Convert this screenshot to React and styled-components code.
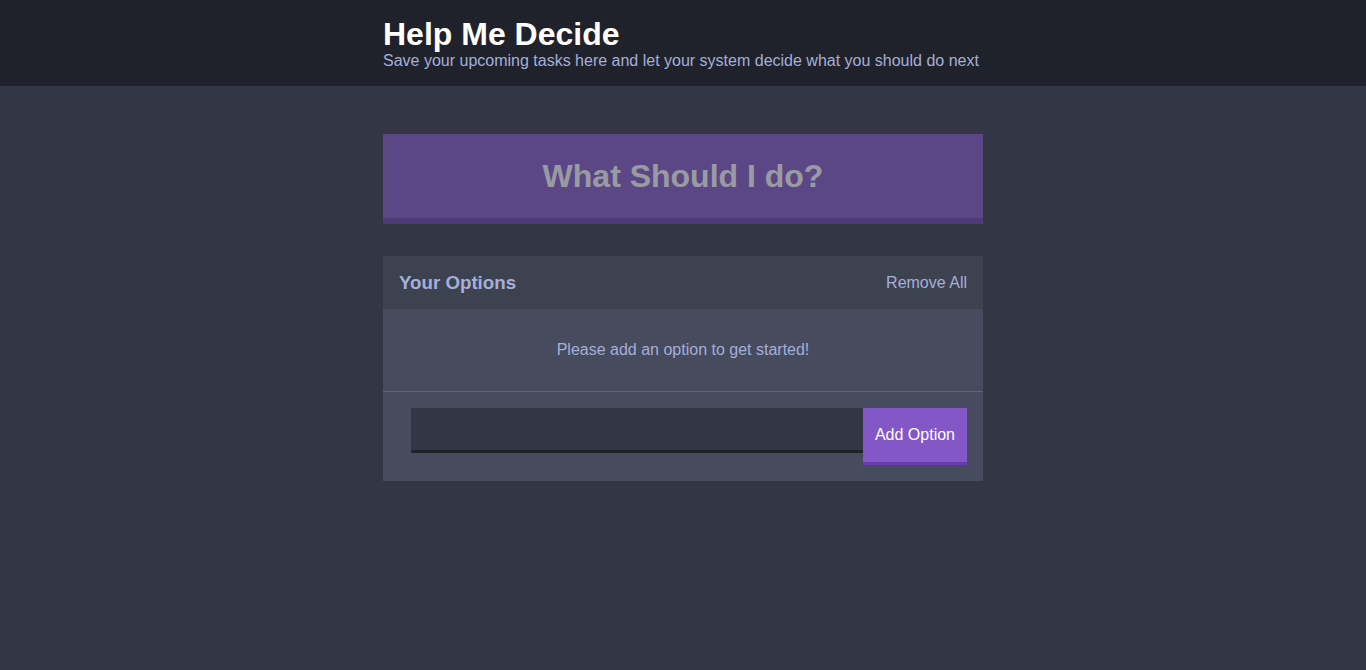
import React from "react";
import styled, { createGlobalStyle } from "styled-components";

const GlobalStyle = createGlobalStyle`
  * { box-sizing: border-box; }
  html, body { margin: 0; padding: 0; }
  body {
    background: #333745;
    color: #a5afd7;
    font-family: "Liberation Sans", Arial, Helvetica, sans-serif;
    font-size: 16px;
    line-height: normal;
  }
  button, input { font-family: inherit; font-size: 16px; }
  h1, h2, h3, p { margin: 0; }
`;

const Header = styled.header`
  background: #20222b;
  padding: 16px 0;
  margin-bottom: 48px;
`;

const Container = styled.div`
  max-width: 600px;
  margin: 0 auto;
`;

const Title = styled.h1`
  color: white;
  font-size: 32px;
  line-height: 36px;
`;

const Subtitle = styled.p`
  line-height: 18px;
`;

const BigButton = styled.button`
  display: block;
  width: 100%;
  margin-bottom: 32px;
  padding: 24px;
  background: #8357c5;
  border: none;
  border-bottom: 6px solid #693cad;
  color: white;
  font-size: 32px;
  line-height: 36px;
  font-weight: bold;

  &:disabled {
    opacity: 0.5;
  }
`;

const Widget = styled.section`
  background: #464b5e;
`;

const WidgetHeader = styled.div`
  display: flex;
  justify-content: space-between;
  align-items: center;
  padding: 16px;
  background: #3d4251;
`;

/* Keeps the browser's own heading size. */
const WidgetTitle = styled.h3`
  line-height: 21px;
`;

const LinkButton = styled.button`
  padding: 0;
  background: none;
  border: none;
  color: #a5afd7;
  line-height: 18px;
`;

const EmptyMessage = styled.p`
  padding: 32px;
  border-bottom: 1px solid #5d647d;
  line-height: 18px;
  text-align: center;
`;

const AddForm = styled.form`
  display: flex;
  align-items: flex-start;
  padding: 16px 16px 16px 28px;
`;

const OptionInput = styled.input`
  flex: 1;
  min-width: 0;
  height: 45px;
  padding: 8px;
  background: #333745;
  border: none;
  border-bottom: 3px solid #20222b;
  border-radius: 0;
  color: #a5afd7;
`;

const AddButton = styled.button`
  padding: 18px 12px;
  background: #8357c5;
  border: none;
  border-bottom: 3px solid #693cad;
  color: white;
  line-height: 18px;
`;

export default function App() {
  return (
    <>
      <GlobalStyle />
      <Header>
        <Container>
          <Title>Help Me Decide</Title>
          <Subtitle>
            Save your upcoming tasks here and let your system decide what you should do next
          </Subtitle>
        </Container>
      </Header>
      <Container as="main">
        <BigButton type="button" disabled>What Should I do?</BigButton>
        <Widget>
          <WidgetHeader>
            <WidgetTitle>Your Options</WidgetTitle>
            <LinkButton type="button">Remove All</LinkButton>
          </WidgetHeader>
          <EmptyMessage>Please add an option to get started!</EmptyMessage>
          <AddForm onSubmit={(event) => event.preventDefault()}>
            <OptionInput type="text" name="option" aria-label="Option" />
            <AddButton type="submit">Add Option</AddButton>
          </AddForm>
        </Widget>
      </Container>
    </>
  );
}
